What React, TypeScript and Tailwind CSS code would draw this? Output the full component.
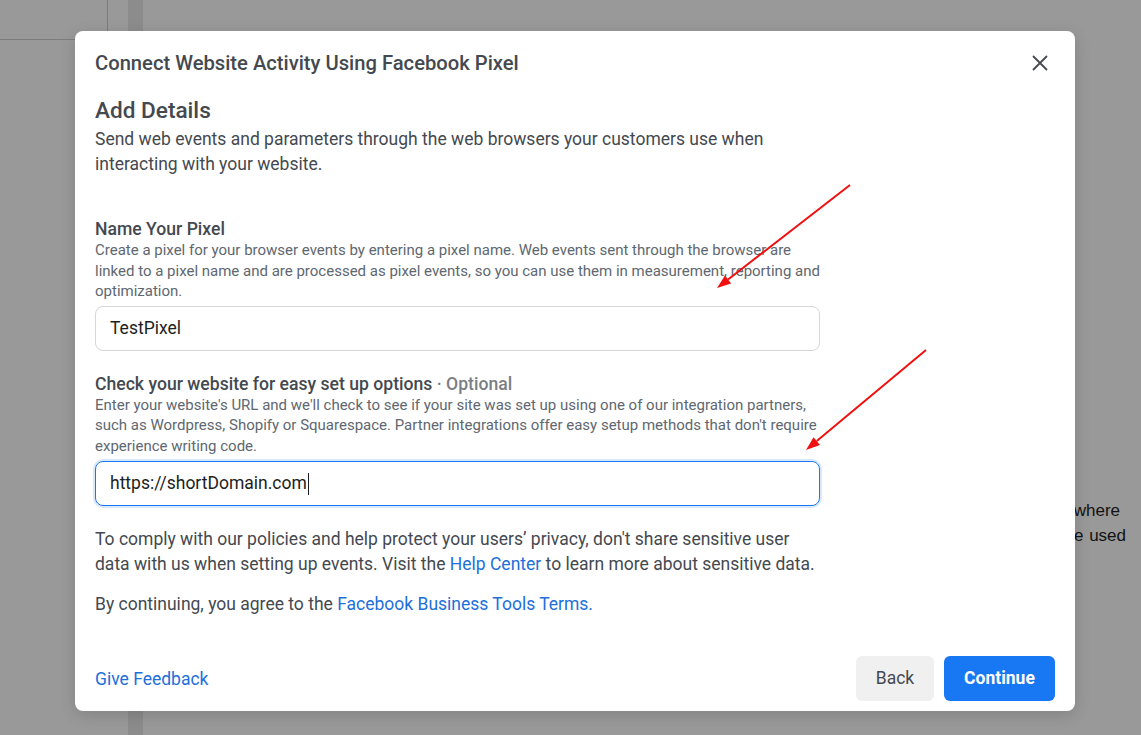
import React from "react";

const font = { fontFamily: "Roboto, 'Noto Sans', Arial, sans-serif" };

const Arrow = ({ x1, y1, x2, y2 }: { x1: number; y1: number; x2: number; y2: number }) => {
  const a = Math.atan2(y2 - y1, x2 - x1);
  const len = 14;
  const w = 5;
  const bx = x2 - len * Math.cos(a);
  const by = y2 - len * Math.sin(a);
  const p1 = `${bx + w * Math.sin(a)},${by - w * Math.cos(a)}`;
  const p2 = `${bx - w * Math.sin(a)},${by + w * Math.cos(a)}`;
  return (
    <g>
      <line x1={x1} y1={y1} x2={bx} y2={by} stroke="#f01010" strokeWidth={2} />
      <polygon points={`${x2},${y2} ${p1} ${p2}`} fill="#f01010" />
    </g>
  );
};

export default function App() {
  return (
    <div className="relative h-[735px] w-[1141px] overflow-hidden bg-white" style={font}>
      {/* page behind the dialog */}
      <div className="flex h-full">
        <div className="w-[108px] shrink-0">
          <div className="h-[40px] border-b border-r border-[#cfcfcf]" />
        </div>
        <div className="ml-[20px] w-[15px] shrink-0 bg-[#e9e9e9]" />
        <div className="flex flex-1 flex-col items-end pt-[498px] text-[17px] leading-[25px] text-[#1c1e21]" style={{ fontFamily: "'Liberation Sans', Arial, sans-serif" }}>
          <div className="mr-[21px] whitespace-nowrap">this pixel to see where</div>
          <div className="mr-[15px] whitespace-nowrap [word-spacing:1px]">data will be used</div>
        </div>
      </div>

      {/* overlay */}
      <div className="absolute inset-0 bg-black/40" />

      {/* dialog */}
      <div className="absolute left-[75px] top-[31px] flex h-[680px] w-[1000px] flex-col rounded-[8px] bg-white px-[20px] shadow-[0_4px_16px_rgba(0,0,0,0.15)]">
        <div className="flex items-center justify-between pt-[20px]">
          <h1 className="text-[20.2px] font-medium leading-[24px] text-[#444950]">
            Connect Website Activity Using Facebook Pixel
          </h1>
          <button className="mr-[3px] flex h-[24px] w-[24px] items-center justify-center text-[#444950]">
            <svg width="16" height="16" viewBox="0 0 16 16" fill="none" stroke="currentColor" strokeWidth="1.8" strokeLinecap="round">
              <path d="M1.5 1.5l13 13M14.5 1.5l-13 13" />
            </svg>
          </button>
        </div>

        <div className="w-[725px]">
          <h2 className="mt-[22px] text-[22.6px] font-medium leading-[28px] text-[#444950]">Add Details</h2>
          <p className="mt-[2px] text-[17.5px] leading-[25px] text-[#444950]">
            Send web events and parameters through the web browsers your customers use when interacting with your website.
          </p>

          <div className="mt-[41px]">
            <div className="text-[17.6px] font-medium leading-[22px] text-[#444950]">Name Your Pixel</div>
            <p className="text-[15px] leading-[20.5px] text-[#606770]">
              Create a pixel for your browser events by entering a pixel name. Web events sent through the browser are linked to a pixel name and are processed as pixel events, so you can use them in measurement, reporting and optimization.
            </p>
            <div className="mt-[4px] flex h-[45px] items-center rounded-[8px] border border-[#d5d7db] px-[14px] text-[17.5px] text-[#1c1e21]">
              TestPixel
            </div>
          </div>

          <div className="mt-[22px]">
            <div className="text-[17.6px] font-medium leading-[22px] text-[#444950]">
              Check your website for easy set up options <span className="text-[#7a7e84]">· Optional</span>
            </div>
            <p className="text-[15px] leading-[20.5px] text-[#606770]">
              Enter your website's URL and we'll check to see if your site was set up using one of our integration partners, such as Wordpress, Shopify or Squarespace. Partner integrations offer easy setup methods that don't require experience writing code.
            </p>
            <div className="mt-[5px] flex h-[45px] items-center rounded-[8px] border border-[#1877f2] px-[14px] text-[17.5px] text-[#1c1e21] shadow-[0_0_0_2px_#dbe7fb]">
              https://shortDomain.com<span className="ml-[1px] inline-block h-[22px] w-[1px] bg-[#1c1e21]" />
            </div>
          </div>

          <p className="mt-[21px] text-[17.5px] leading-[25px] text-[#444950]">
            To comply with our policies and help protect your users’ privacy, don't share sensitive user data with us when setting up events. Visit the <span className="text-[#216fdb]">Help Center</span> to learn more about sensitive data.
          </p>
          <p className="mt-[15px] text-[17.5px] leading-[25px] text-[#444950]">
            By continuing, you agree to the <span className="text-[#216fdb]">Facebook Business Tools Terms.</span>
          </p>
        </div>

        <div className="mt-auto flex items-center justify-between pb-[10px]">
          <span className="mt-[2px] text-[17.5px] text-[#216fdb]">Give Feedback</span>
          <div className="flex gap-[10px]">
            <button className="h-[45px] w-[78px] rounded-[6px] bg-[#f0f0f0] text-[17.5px] text-[#444950]">Back</button>
            <button className="h-[45px] w-[111px] rounded-[6px] bg-[#1877f2] text-[17.5px] font-bold text-white">Continue</button>
          </div>
        </div>
      </div>

      {/* annotation arrows */}
      <svg className="pointer-events-none absolute inset-0" width="1141" height="735">
        <Arrow x1={850} y1={185} x2={717} y2={288} />
        <Arrow x1={926} y1={350} x2={806} y2={450} />
      </svg>
    </div>
  );
}
